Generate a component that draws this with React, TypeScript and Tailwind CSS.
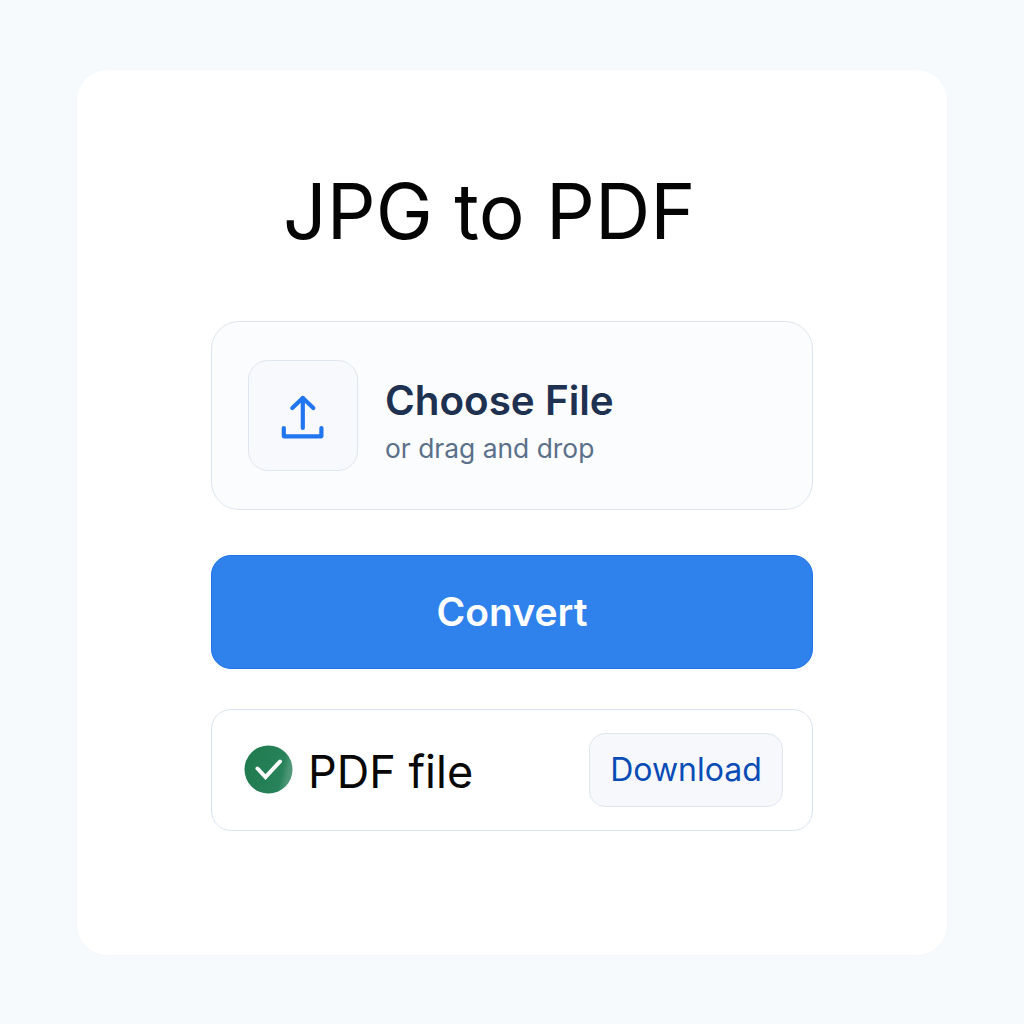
export default function App() {
  return (
    <div className="min-h-[1024px] bg-[#f7fafd] px-[77px] pt-[70px] font-['Inter',sans-serif]">
      <div className="h-[885px] w-[870px] rounded-[30px] bg-white px-[134px] pt-[97px] shadow-[0_0_2px_rgba(226,232,240,0.4)]">
        <h1 className="h-[154px] pl-[72px] text-left text-[76.6px] font-normal leading-[88px] text-[#050505]">JPG to PDF</h1>
        <div className="flex h-[189px] items-center gap-[27px] rounded-[28px] border border-[#dfe5ee] bg-[#fbfcfe] pl-[36px]">
          <div className="flex h-[111px] w-[110px] items-center justify-center rounded-[20px] border border-[#e0e6ef] bg-[#f8f9fc]">
            <svg width="46" height="46" viewBox="0 0 46 46" fill="none" stroke="#2176f0" strokeWidth="4.2" strokeLinecap="round" strokeLinejoin="round">
              <path d="M22.8 5V35" />
              <path d="M12.3 15 22.8 5l10.5 10" />
              <path d="M3.8 35v8.3h37.6V35" />
            </svg>
          </div>
          <div className="flex flex-col pt-[13px]">
            <span className="text-[40.4px] font-semibold leading-[52px] text-[#1e3150]">Choose File</span>
            <span className="text-[26.4px] leading-[42px] text-[#5a7089]">or drag and drop</span>
          </div>
        </div>
        <button className="mt-[45px] flex h-[114px] w-full items-center justify-center rounded-[20px] border border-[#1f72ea] bg-[#2f82ec] text-[39px] font-semibold text-white">Convert</button>
        <div className="mt-[40px] flex h-[122px] items-center justify-between rounded-[20px] border border-[#dbe3ee] bg-white pl-[32px] pr-[29px]">
          <div className="flex items-center gap-[15px]">
            <svg className="mb-[2px]" width="49" height="49" viewBox="0 0 49 49">
              <defs>
                <linearGradient id="g" x1="0" y1="0" x2="1" y2="0.2">
                  <stop offset="0" stopColor="#1f7a4f" />
                  <stop offset="0.85" stopColor="#28825a" />
                  <stop offset="1" stopColor="#4f9877" />
                </linearGradient>
              </defs>
              <circle cx="24.5" cy="24.5" r="24" fill="url(#g)" />
              <path d="M13.5 23.5 21.5 32 36 16.5" fill="none" stroke="#fff" strokeWidth="4" strokeLinecap="round" strokeLinejoin="miter" />
            </svg>
            <span className="pt-[3px] text-[45px] leading-[56px] text-[#080808]">PDF file</span>
          </div>
          <button className="flex h-[74px] w-[194px] items-center justify-center rounded-[16px] border border-[#e0e6f0] bg-[#f6f8fc] text-[32px] text-[#0a4cb5]">Download</button>
        </div>
      </div>
    </div>
  );
}
